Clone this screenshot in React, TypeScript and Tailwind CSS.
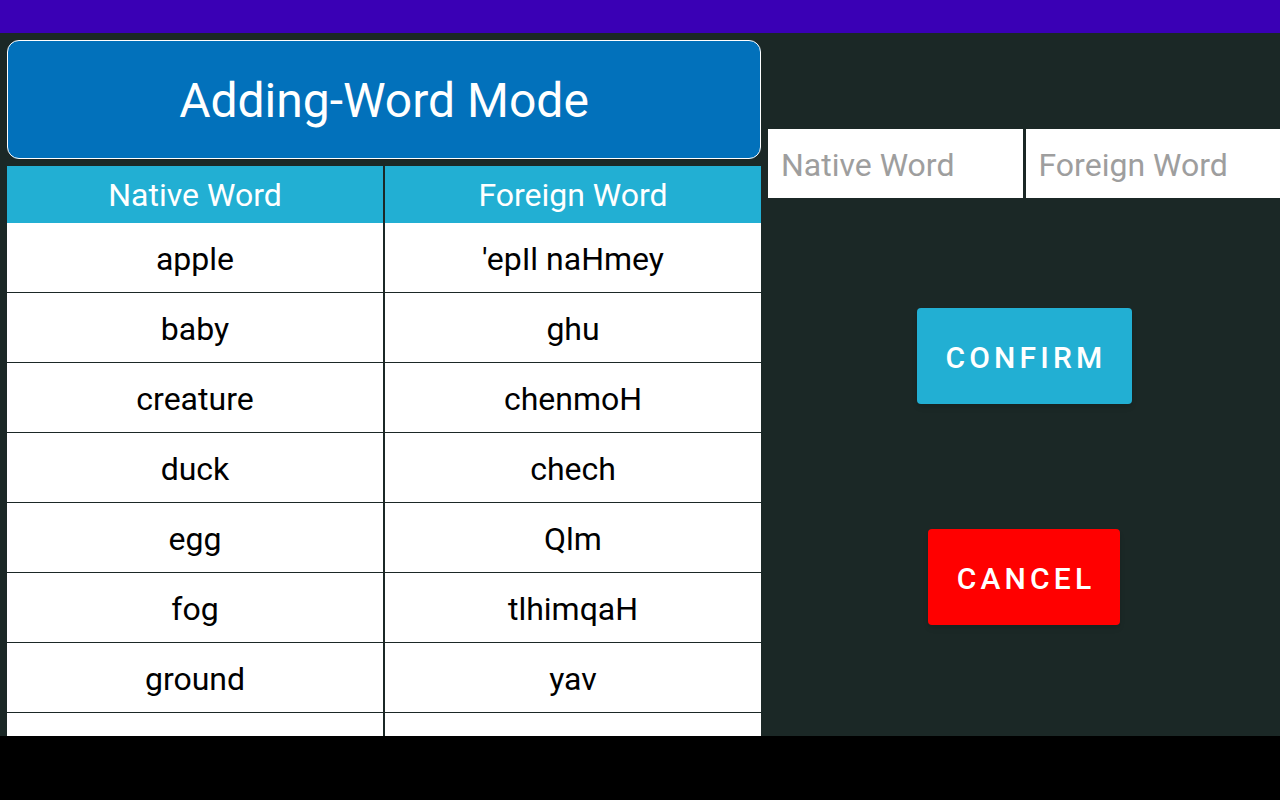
const words: [string, string][] = [
  ["apple", "'epIl naHmey"],
  ["baby", "ghu"],
  ["creature", "chenmoH"],
  ["duck", "chech"],
  ["egg", "Qlm"],
  ["fog", "tlhimqaH"],
  ["ground", "yav"],
  ["", ""],
];

export default function App() {
  return (
    <div
      className="w-[1280px] h-[800px] flex flex-col bg-black overflow-hidden"
      style={{ fontFamily: "Roboto, 'Noto Sans', sans-serif" }}
    >
      {/* status bar */}
      <div className="h-[33px] bg-[#3a00b5] shrink-0" />

      {/* main content */}
      <div className="h-[703px] bg-[#1b2826] flex overflow-hidden shrink-0">
        {/* left: title + word table */}
        <div className="w-[761px] shrink-0 pl-[7px] pt-[7px] flex flex-col">
          <div className="h-[119px] shrink-0 pt-[3px] rounded-[12px] border border-white bg-[#0271bb] flex items-center justify-center">
            <span className="text-white text-[48px] leading-none">Adding-Word Mode</span>
          </div>

          {/* header */}
          <div className="mt-[7px] flex gap-[2px] h-[57px] shrink-0">
            <div className="flex-1 bg-[#22afd3] text-white text-[32px] flex items-center justify-center">
              Native Word
            </div>
            <div className="flex-1 bg-[#22afd3] text-white text-[32px] flex items-center justify-center">
              Foreign Word
            </div>
          </div>

          <div className="flex flex-col gap-px">
            {words.map(([native, foreign], i) => (
              <div key={i} className="flex gap-[2px] h-[69px] shrink-0">
                <div className="flex-1 pt-[2px] bg-white text-black text-[32px] flex items-center justify-center">
                  {native}
                </div>
                <div className="flex-1 pt-[2px] bg-white text-black text-[32px] flex items-center justify-center">
                  {foreign}
                </div>
              </div>
            ))}
          </div>
        </div>

        {/* right: inputs + buttons */}
        <div className="flex-1 min-w-0 pl-[7px] flex flex-col items-stretch">
          <div className="mt-[96px] flex gap-[3px] h-[69px]">
            <input
              placeholder="Native Word"
              className="flex-1 min-w-0 bg-white px-[13px] pt-[2px] text-[32px] text-black placeholder:text-[#9e9e9e] outline-none"
            />
            <input
              placeholder="Foreign Word"
              className="flex-1 min-w-0 bg-white px-[13px] pt-[2px] text-[32px] text-black placeholder:text-[#9e9e9e] outline-none"
            />
          </div>

          <div className="flex justify-center mt-[110px]">
            <button className="w-[215px] h-[96px] pl-[4px] pt-[2px] rounded-[4px] bg-[#22afd3] text-white text-[30px] font-medium tracking-[0.14em] shadow-md">
              CONFIRM
            </button>
          </div>

          <div className="flex justify-center mt-[125px]">
            <button className="w-[192px] h-[96px] pl-[4px] pt-[2px] rounded-[4px] bg-[#ff0000] text-white text-[30px] font-medium tracking-[0.14em] shadow-md">
              CANCEL
            </button>
          </div>
        </div>
      </div>

      {/* navigation bar */}
      <div className="flex-1 bg-black" />
    </div>
  );
}
